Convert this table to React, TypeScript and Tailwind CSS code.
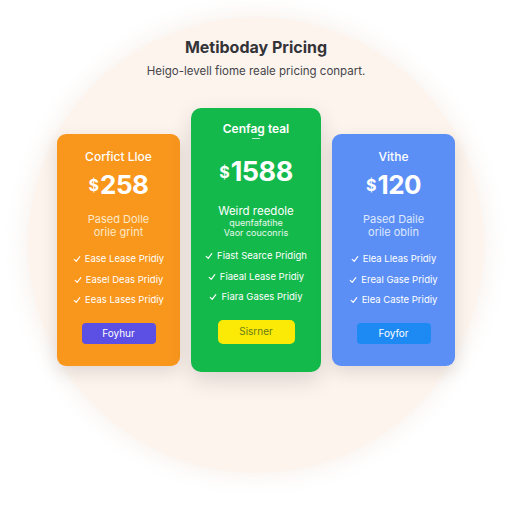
import React from 'react';

type Plan = {
  name: string;
  price: string;
  desc: string[];
  features: string[];
  cta: string;
  card: string;
  descColor: string;
  button: string;
  buttonText: string;
};

const side: Plan[] = [
  {
    name: 'Corfict Lloe',
    price: '258',
    desc: ['Pased Dolle', 'orile grint'],
    features: ['Ease Lease Pridiy', 'Easel Deas Pridiy', 'Eeas Lases Pridiy'],
    cta: 'Foyhur',
    card: 'bg-[#f9961c]',
    descColor: 'text-[#fde9c8]',
    button: 'bg-[#5b4fe4]',
    buttonText: 'text-white',
  },
  {
    name: 'Vithe',
    price: '120',
    desc: ['Pased Daile', 'orile oblin'],
    features: ['Elea Lleas Pridiy', 'Ereal Gase Pridiy', 'Elea Caste Pridiy'],
    cta: 'Foyfor',
    card: 'bg-[#5c8ff6]',
    descColor: 'text-[#dde8ff]',
    button: 'bg-[#1d8af3]',
    buttonText: 'text-white',
  },
];

function Check() {
  return (
    <svg width="8" height="8" viewBox="0 0 10 10" fill="none" className="shrink-0">
      <path d="M1.5 5.5 L4 8 L8.5 2" stroke="white" strokeWidth="1.4" strokeLinecap="round" strokeLinejoin="round" />
    </svg>
  );
}

function Features({ items }: { items: string[] }) {
  return (
    <div className="flex flex-col items-center">
      {items.map((f) => (
        <div key={f} className="flex items-center gap-[4px] h-[20.5px] text-[9.5px] text-white">
          <Check />
          <span>{f}</span>
        </div>
      ))}
    </div>
  );
}

function SideCard({ plan }: { plan: Plan }) {
  return (
    <div className={`w-[123px] h-[232px] mt-[26px] rounded-[9px] ${plan.card} shadow-[0_6px_18px_rgba(0,0,0,0.12)] flex flex-col items-center pt-[15px]`}>
      <div className="text-[12px] leading-[16px] text-white font-medium">{plan.name}</div>
      <div className="mt-[4px] flex items-center text-white font-bold leading-[32px]">
        <span className="text-[16px] mr-[1px]">$</span>
        <span className="text-[26px] tracking-[-0.5px]">{plan.price}</span>
      </div>
      <div className={`mt-[12px] flex flex-col items-center text-[11px] leading-[13px] ${plan.descColor}`}>
        {plan.desc.map((d) => (
          <span key={d}>{d}</span>
        ))}
      </div>
      <div className="mt-[10px]">
        <Features items={plan.features} />
      </div>
      <button className={`mt-[12px] w-[74px] h-[21px] rounded-[4px] ${plan.button} ${plan.buttonText} text-[10px] flex items-center justify-center`}>
        {plan.cta}
      </button>
    </div>
  );
}

function FeaturedCard() {
  return (
    <div className="w-[130px] h-[264px] rounded-[10px] bg-[#14b94c] shadow-[0_8px_22px_rgba(0,0,0,0.14)] flex flex-col items-center pt-[13px]">
      <div className="text-[12px] leading-[16px] text-white font-semibold">Cenfag teal</div>
      <div className="mt-[1px] w-[8px] h-[1px] bg-white/70" />
      <div className="mt-[17px] flex items-center text-white font-bold leading-[32px]">
        <span className="text-[16px] mr-[1px]">$</span>
        <span className="text-[27px] tracking-[-0.5px]">1588</span>
      </div>
      <div className="mt-[16px] flex flex-col items-center text-white">
        <span className="text-[11.5px] leading-[14px]">Weird reedole</span>
        <span className="text-[9px] leading-[10px] text-white/90">quenfafatihe</span>
        <span className="text-[9px] leading-[10px] text-white/90">Vaor couconris</span>
      </div>
      <div className="mt-[8px]">
        <Features items={['Fiast Searce Pridigh', 'Fiaeal Lease Pridiy', 'Fiara Gases Pridiy']} />
      </div>
      <button className="mt-[12px] w-[77px] h-[24px] rounded-[5px] bg-[#fbea06] text-[#6b7a16] text-[10px] flex items-center justify-center">
        Sisrner
      </button>
    </div>
  );
}

export default function App() {
  return (
    <div className="w-[512px] h-[512px] bg-white flex justify-center pt-[17px] font-['Inter',sans-serif]">
      <div className="w-[456px] h-[456px] rounded-full bg-[#fdf4ee] shadow-[0_0_24px_rgba(240,225,215,0.6)] flex flex-col items-center pt-[20px]">
        <h1 className="text-[16px] leading-[20px] font-bold text-[#333338]">Metiboday Pricing</h1>
        <p className="mt-[6px] text-[11.5px] leading-[16px] text-[#45454a]">Heigo-levell fiome reale pricing conpart.</p>
        <div className="mt-[29px] flex items-start gap-[11px]">
          <SideCard plan={side[0]} />
          <FeaturedCard />
          <SideCard plan={side[1]} />
        </div>
      </div>
    </div>
  );
}
